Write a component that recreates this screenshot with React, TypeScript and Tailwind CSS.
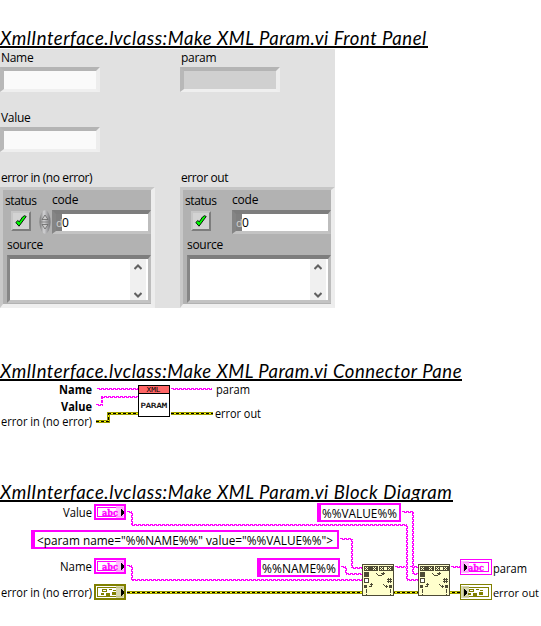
import type { ReactNode } from "react";

const UI = '"Open Sans", "Noto Sans", sans-serif';
const PINK = "#ff00ff";
const OLIVE = "#808000";
const INK = "#4d4a35";

function Heading({ children, className }: { children: ReactNode; className: string }) {
  return (
    <h2
      className={`h-[21px] overflow-hidden whitespace-nowrap border-b-2 border-black font-['Lato',sans-serif] text-[18.5px] leading-[23px] italic text-black ${className}`}
    >
      {children}
    </h2>
  );
}

function Label({ children, className = "tracking-[-0.43px]" }: { children: ReactNode; className?: string }) {
  return (
    <div className={`whitespace-nowrap text-[12px] leading-[18px] text-black ${className}`}>
      {children}
    </div>
  );
}

function Field({ label, fill }: { label: string; fill: string }) {
  return (
    <div className="h-[60px]">
      <Label className="pl-px tracking-[-0.3px]">{label}</Label>
      <div
        className={`h-[25px] w-[100px] border-4 border-b-[3px] border-t-[#b4b4b4] border-l-[#b8b8b8] border-r-[#ededed] border-b-[#efefef] ${fill}`}
      />
    </div>
  );
}

function Spinner() {
  return (
    <svg width="12" height="24" viewBox="0 0 12 24">
      <defs>
        <linearGradient id="metal">
          <stop offset="0" stopColor="#777" />
          <stop offset=".4" stopColor="#d2d2d4" />
          <stop offset="1" stopColor="#737376" />
        </linearGradient>
      </defs>
      <ellipse cx="6" cy="12" rx="5.5" ry="11.7" fill="url(#metal)" />
      <path d="M3 9.5 6 5l3 4.500zM3 14.500 6 19l3-4.500z" fill="#ccc" stroke="#666" strokeWidth=".8" />
      <path d="M1 12h10" stroke="#858585" />
    </svg>
  );
}

function ErrorCluster({ label, spinner }: { label: string; spinner?: boolean }) {
  return (
    <div>
      <Label className="h-[18px] pl-px tracking-[-0.4px]">{label}</Label>
      <div className="h-[121px] w-[155px] border-4 border-t-[3px] border-l-[3px] border-t-[#c6c6c6] border-l-[#c8c8c8] border-r-[#ededed] border-b-[#efefef] bg-[#b2b2b2]">
        <div className="flex h-[20px] pl-[2px]">
          <Label className="w-[47px] pt-[2px] tracking-[-0.4px]">status</Label>
          <Label className="pt-px tracking-[-0.2px]">code</Label>
        </div>
        <div className="flex h-[24px]">
          <div className="ml-[8px] mt-px flex h-[20px] w-[20px] items-center justify-center border-2 border-t-[#c6c6c6] border-l-[#c6c6c6] border-r-[#7d7d7d] border-b-[#7d7d7d] bg-[#d3d3d3]">
            <svg width="12" height="12" viewBox="0 0 12 12">
              <path d="M.8 7.500 4 11.200 11.200 1.500 9.500.7 7.500 2 4.300 6.800 2.800 5.600z" fill="#00ff00" stroke="#000" strokeWidth=".9" strokeLinejoin="round" />
            </svg>
          </div>
          <div className="ml-[6px] w-[14px] pl-[2px]">{spinner && <Spinner />}</div>
          <div className="ml-px flex h-[24px] w-[99px] border-[3px] border-t-4 border-l-4 border-t-[#7d7d7d] border-l-[#858585] border-r-[#bdbdbd] border-b-[#c3c3c3] bg-white">
            <div className="w-[6px] bg-[#808080] text-[11px] leading-[17px] text-[#d2d2d2]">d</div>
            <Label>0</Label>
          </div>
        </div>
        <Label className="h-[21px] pt-[2px] pl-[4px] tracking-[-0.3px]">source</Label>
        <div className="ml-[4px] flex h-[48px] w-[144px] justify-end border-[3px] border-t-4 border-t-[#7d7d7d] border-l-[#858585] border-r-[#bdbdbd] border-b-[#c3c3c3] bg-white pr-[2px]">
          <div className="flex h-[41px] w-[16px] flex-col items-center justify-between bg-[#f0f0f0] pt-[5px] pb-[2px]">
            <svg width="8" height="6" viewBox="0 0 8 6" fill="none" stroke="#606060" strokeWidth="2">
              <path d="M.5 5 4 1.500 7.500 5" />
            </svg>
            <svg width="8" height="6" viewBox="0 0 8 6" fill="none" stroke="#606060" strokeWidth="2">
              <path d="M.5 1 4 4.500 7.500 1" />
            </svg>
          </div>
        </div>
      </div>
    </div>
  );
}

type TProps = { x: number; y: number; w: number; bold?: boolean; size?: number; children: string };
function T({ x, y, w, bold, size = 12, children }: TProps) {
  return (
    <text x={x} y={y} textLength={w} lengthAdjust="spacingAndGlyphs" fontFamily={UI} fontSize={size} fontWeight={bold ? 700 : 400}>
      {children}
    </text>
  );
}

type Point = [number, number];

// A string wire is two interleaved dashed strands, one pixel apart.
function StringWire({ points }: { points: Point[] }) {
  const a = points.map(([x, y]) => `${x + 0.5},${y + 0.5}`).join(" ");
  const b = points.map(([x, y]) => `${x + 1.5},${y + 1.5}`).join(" ");
  return (
    <g fill="none" stroke={PINK} shapeRendering="crispEdges">
      <polyline points={a} strokeDasharray="3 1" />
      <polyline points={b} strokeDasharray="3 1" strokeDashoffset="3" />
    </g>
  );
}

function ErrorWire({ points }: { points: Point[] }) {
  const p = points.map(([x, y]) => `${x + 0.5},${y + 0.5}`).join(" ");
  return (
    <g fill="none" shapeRendering="crispEdges">
      <polyline points={p} stroke="#9a9a00" strokeWidth="3" />
      <polyline points={p} stroke="#ffff00" />
      <polyline points={p} stroke="#000" strokeDasharray="3 2" />
    </g>
  );
}

function Constant({ x, y, w, tx, tw, children }: { x: number; y: number; w: number; tx: number; tw: number; children: string }) {
  return (
    <g>
      <rect x={x} y={y} width={w} height="19" fill={PINK} />
      <rect x={x + 4} y={y + 2} width={w - 6} height="15" fill="#fff" />
      <T x={tx} y={y + 14.5} w={tw}>{children}</T>
    </g>
  );
}

function Terminal({ x, y, error, out }: { x: number; y: number; error?: boolean; out?: boolean }) {
  const c = error ? OLIVE : PINK;
  const edge = out ? 1 : 2;
  const sx = out ? x + 1 : x + 22;
  const tx = out ? x + 9 : x + 8;
  return (
    <g shapeRendering="crispEdges">
      <rect x={x} y={y} width="32" height="16" fill={c} />
      <rect x={x + edge} y={y + edge} width={32 - 2 * edge} height={16 - 2 * edge} fill="#fff" />
      <rect x={x + 3.5} y={y + 3.5} width="25" height="9" fill="none" stroke={c} />
      <rect x={sx} y={y + 2} width="8" height="12" fill={error ? "#d0d0a0" : "#ffb0ff"} opacity=".82" />
      {error ? (
        <g fill={c}>
          <path d={`M${tx} ${y + 5}h5v3h-5zM${tx + 7} ${y + 5}h3v1h-3zM${tx + 11} ${y + 6}h3v1h-3zM${tx - 1} ${y + 9}h3v2h-3zM${tx + 4} ${y + 9}h4v3h-4zM${tx + 10} ${y + 8}h4v3h-4z`} />
          <path d={`M${tx + 1} ${y + 6}h3v1h-3z`} fill="#fff" />
        </g>
      ) : (
        <text x={out ? x + 8 : tx} y={y + 11.500} textLength="16" lengthAdjust="spacingAndGlyphs" fontFamily="'DejaVu Serif', serif" fontWeight="700" fontSize="9" fill={c} stroke={c} strokeWidth=".3">
          abc
        </text>
      )}
      <path d={`M${out ? x + 4 : x + 27} ${y + 5}v7l3-3v-1z`} fill="#000" />
    </g>
  );
}

// The Search and Replace String primitive.
function ReplaceNode({ x, y }: { x: number; y: number }) {
  return (
    <g transform={`translate(${x} ${y})`} shapeRendering="crispEdges">
      <rect x=".5" y=".5" width="31" height="31" fill="#ffffcc" stroke={INK} />
      <path d="M2 2h14v5H2zM17 2h14v5H17z" fill={INK} />
      <path
        d="M3 3h1v1H3zM5 3h1v1H5zM4 4h1v1H4zM3 5h1v1H3zM5 5h1v1H5zM11 3h1v1h-1zM13 3h1v1h-1zM12 4h1v1h-1zM11 5h1v1h-1zM13 5h1v1h-1zM18 3h1v1h-1zM20 3h1v1h-1zM19 4h1v1h-1zM18 5h1v1h-1zM20 5h1v1h-1zM22 3h3v3h-3zM26 3h1v1h-1zM28 3h1v1h-1zM27 4h1v1h-1zM26 5h1v1h-1zM28 5h1v1h-1z"
        fill="#ffffcc"
      />
      <path d="M2 8h5v5H2zM2 21h3v3H2zM27 21h3v3h-3zM4 25h1v4H4zM4 30h1v1H4zM28 25h1v4h-1zM28 30h1v1h-1z" fill={INK} />
      <path d="M2.500 14.500h4v4h-4z" fill="#fff" stroke={INK} />
      <path
        d="M14 9h1v1h-1zM15 10h1v1h-1zM16 11h4v1h-4zM20 10h1v1h-1zM19 9h4v1h-4zM21 8h1v3h-1zM7 22h2v1H7zM9 19h1v4H9zM8 20h3v1H8zM21 20h1v1h-1zM22 21h1v1h-1zM23 22h3v1h-3zM24 21h1v3h-1zM25 15h5v1h-5zM25 17h5v1h-5zM26 14h1v5h-1zM28 14h1v5h-1z"
        fill={INK}
      />
    </g>
  );
}

function ConnectorPane() {
  return (
    <svg className="block" width="541" height="60" viewBox="0 381 541 60">
      <StringWire points={[[96, 388], [138, 388]]} />
      <StringWire points={[[95, 404], [101, 404], [101, 396], [138, 396]]} />
      <ErrorWire points={[[95, 421], [108, 421], [108, 413], [138, 413]]} />
      <StringWire points={[[170, 388], [211, 388]]} />
      <ErrorWire points={[[170, 413], [212, 413]]} />
      <g shapeRendering="crispEdges">
        <rect x="138.500" y="385.500" width="31" height="31" fill="#fff" stroke="#000" />
        <rect x="139" y="386" width="30" height="7" fill="#ff6666" />
        <path d="M139 393.500h30" stroke="#000" />
      </g>
      <g fontFamily="'DejaVu Sans Mono', monospace" fontSize="7">
        <text x="146.500" y="392" textLength="14" lengthAdjust="spacingAndGlyphs">XML</text>
        <text x="140.500" y="408" textLength="26.500" lengthAdjust="spacingAndGlyphs" stroke="#000" strokeWidth=".2">PARAM</text>
      </g>
      <T x={59} y={394} w={33} bold>Name</T>
      <T x={61} y={410.5} w={31} bold>Value</T>
      <T x={1} y={426} w={91}>error in (no error)</T>
      <T x={216} y={394} w={34}>param</T>
      <T x={215} y={418} w={46}>error out</T>
    </svg>
  );
}

function BlockDiagram() {
  return (
    <svg className="block" width="541" height="124" viewBox="0 502 541 124">
      <StringWire points={[[126, 511], [131, 511], [131, 524], [406, 524], [406, 579], [418, 579]]} />
      <StringWire points={[[401, 511], [412, 511], [412, 573], [418, 573]]} />
      <StringWire points={[[339, 538], [351, 538], [351, 567], [362, 567]]} />
      <StringWire points={[[340, 566], [345, 566], [345, 573], [362, 573]]} />
      <StringWire points={[[126, 565], [131, 565], [131, 579], [362, 579]]} />
      <StringWire points={[[394, 566], [404, 566]]} />
      <StringWire points={[[409, 566], [418, 566]]} />
      <StringWire points={[[450, 566], [460, 566]]} />
      <ErrorWire points={[[126, 592], [460, 592]]} />
      <ReplaceNode x={362} y={564} />
      <ReplaceNode x={418} y={564} />
      <Terminal x={94} y={504} />
      <Terminal x={94} y={558} />
      <Terminal x={94} y={584} error />
      <Terminal x={460} y={559} out />
      <Terminal x={460} y={584} error out />
      <Constant x={317} y={503} w={84} tx={322} tw={75}>%%VALUE%%</Constant>
      <Constant x={31} y={530} w={308} tx={37} tw={296}>{'<param name="%%NAME%%" value="%%VALUE%%">'}</Constant>
      <Constant x={257} y={558} w={83} tx={262} tw={74}>%%NAME%%</Constant>
      <T x={63} y={517} w={29}>Value</T>
      <T x={60} y={571} w={32}>Name</T>
      <T x={1} y={597} w={91}>error in (no error)</T>
      <T x={493} y={572.5} w={34}>param</T>
      <T x={493} y={597} w={46} size={11.5}>error out</T>
    </svg>
  );
}

export default function App() {
  return (
    <main className="h-[626px] w-[541px] overflow-hidden bg-white pt-[27px] font-['Open_Sans','Noto_Sans',sans-serif]">
      <Heading className="w-[428px] tracking-[0.54px]">XmlInterface.lvclass:Make XML Param.vi Front Panel</Heading>
      <section className="mt-px grid h-[259px] w-[335px] grid-cols-[180px_155px] bg-[#e1e1e1]">
        <div>
          <Field label="Name" fill="bg-[#fafafa]" />
          <Field label="Value" fill="bg-[#fafafa]" />
          <ErrorCluster label="error in (no error)" spinner />
        </div>
        <div>
          <Field label="param" fill="bg-[#d0d0d0]" />
          <div className="h-[60px]" />
          <ErrorCluster label="error out" />
        </div>
      </section>
      <Heading className="mt-[52px] w-[462px] tracking-[0.52px]">XmlInterface.lvclass:Make XML Param.vi Connector Pane</Heading>
      <ConnectorPane />
      <Heading className="mt-[40px] w-[453px] tracking-[0.54px]">XmlInterface.lvclass:Make XML Param.vi Block Diagram</Heading>
      <BlockDiagram />
    </main>
  );
}
